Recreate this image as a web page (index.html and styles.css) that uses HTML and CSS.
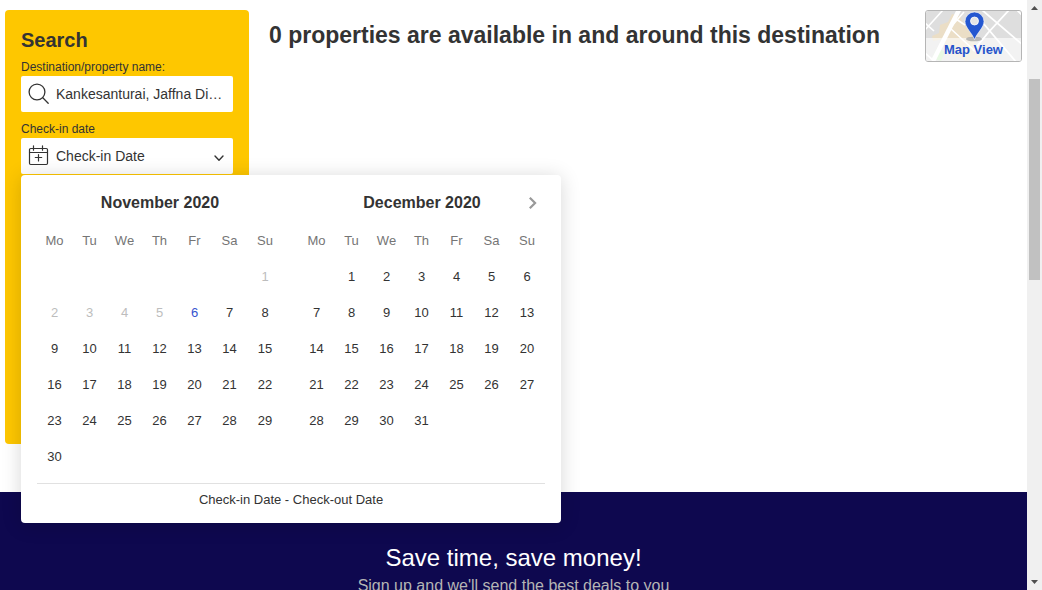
FILE: index.html
```html
<!DOCTYPE html>
<html lang="en">
<head>
<meta charset="utf-8">
<title>Search results</title>
<link rel="stylesheet" href="styles.css">
</head>
<body>
<div class="viewport">
  <div class="page">
    <main class="results">
      <aside class="search">
        <h2 class="search-title">Search</h2>
        <label class="label">Destination/property name:</label>
        <div class="field">
          <svg class="field-icon" width="22" height="22" viewBox="0 0 22 22" fill="none" stroke="#333" stroke-width="1.3" stroke-linecap="round"><circle cx="9" cy="9" r="7.900"/><path d="M14.800 14.800L20.200 20.200"/></svg>
          <span class="field-text">Kankesanturai, Jaffna District, Sri Lanka</span>
        </div>
        <label class="label label-date">Check-in date</label>
        <div class="field field-date">
          <svg class="field-icon" width="22" height="22" viewBox="0 0 22 22" fill="none" stroke="#333" stroke-width="1.2" stroke-linecap="round"><rect x="1.500" y="3.500" width="18" height="16" rx="1.200"/><path d="M1.500 7.500H19.500M5.500 .8v4.400M14.500 .8v4.400M10.500 9.500v6.400M7.300 12.500h6.400"/></svg>
          <span class="field-text">Check-in Date</span>
          <svg class="chevron" width="10" height="7" viewBox="0 0 10 7" fill="none" stroke="#333" stroke-width="1.4" stroke-linecap="round" stroke-linejoin="round"><path d="M1 1l4 4.200L9 1"/></svg>
          <section class="calendar">
            <div class="months">
              <div class="month">
                <h3 class="month-title">November 2020</h3>
                <div class="days" data-days="30" data-offset="6" data-today="6"></div>
              </div>
              <div class="month">
                <h3 class="month-title">December 2020</h3>
                <div class="days" data-days="31" data-offset="1" data-today="0"></div>
              </div>
            </div>
            <div class="range">Check-in Date - Check-out Date</div>
            <svg class="next" width="10" height="14" viewBox="0 0 10 14" fill="none" stroke="#999" stroke-width="2.200"><path d="M1.800 1.700l5.300 5.300-5.300 5.300"/></svg>
          </section>
        </div>
      </aside>
      <h1 class="heading">0 properties are available in and around this destination</h1>
      <div class="map">
        <svg class="map-art" width="95" height="50" viewBox="0 0 95 50">
          <rect width="95" height="50" fill="#dedede"/>
          <path d="M6 25l7-3 1-8 8-3 4-8 8 2 2 5 7 7 6 14 6 15-15 4-18-8-4-14-11 2z" fill="#ebdec6"/>
          <path d="M11 37l8 4-4 9-9-3z" fill="#c5efb8"/>
          <g stroke="#fff" fill="none">
            <path d="M34-3L7 50" stroke-width="4.500"/>
            <path d="M-1 12l9 8M-1 19L17-1M24 17l26 24M30 8l9 6M38 1L24 17" stroke-width="1.600"/>
            <path d="M56-1l42 36M60 24L84-2M47 40L62 22M57 12l34 40M90-2l8 8M-1 42l10 9" stroke-width="1.800"/>
          </g>
          <rect y="27" width="95" height="23" fill="#fff" fill-opacity=".6"/>
          <ellipse cx="48" cy="28" rx="8" ry="2.300" fill="#999" fill-opacity=".65"/>
          <path d="M48.500 28.600C46 22 39 16.500 39 10.500a9.500 9.500 0 0 1 19 0c0 6-7 11.500-9.500 18.100z" fill="#2457d0" stroke="#fff" stroke-width=".6"/>
          <circle cx="48.500" cy="10" r="4" fill="#e5e5e5" stroke="#fff" stroke-width=".8"/>
        </svg>
        <span class="map-label">Map View</span>
      </div>
    </main>
    <footer class="newsletter">
      <div class="news-title">Save time, save money!</div>
      <div class="news-sub">Sign up and we'll send the best deals to you</div>
    </footer>
  </div>
  <div class="scrollbar">
    <svg width="7" height="4" viewBox="0 0 7 4"><path d="M0 4L3.500 0 7 4z" fill="#505050"/></svg>
    <div class="thumb"></div>
    <svg width="7" height="4" viewBox="0 0 7 4"><path d="M0 0h7L3.500 4z" fill="#505050"/></svg>
  </div>
</div>
<script src="calendar.js"></script>
</body>
</html>
```
FILE: styles.css
```css
* { box-sizing: border-box; }
body {
  margin: 0;
  overflow: hidden;
  font-family: "Liberation Sans", Arial, sans-serif;
  color: #333;
}
h1, h2, h3 { margin: 0; }
svg { display: block; flex: none; }
.viewport { display: flex; height: 590px; overflow: hidden; background: #fff; }
.page { width: 1027px; flex: none; }
.results { display: flex; align-items: flex-start; height: 492px; padding: 10px 5px; }
.search {
  width: 244px;
  height: 434px;
  flex: none;
  padding: 16px;
  border-radius: 4px;
  background: #fec700;
}
.search-title { font-size: 20px; line-height: 28px; height: 33px; }
.label { display: block; font-size: 12px; line-height: 17px; }
.label-date { margin-top: 8px; height: 18px; padding-top: 1px; }
.field {
  display: flex;
  align-items: center;
  height: 36px;
  padding: 0 10px 0 7px;
  border-radius: 2px;
  background: #fff;
  font-size: 14px;
}
.field-date { position: relative; }
.field-icon { margin-right: 6px; }
.field-text { flex: 1; overflow: hidden; white-space: nowrap; text-overflow: ellipsis; line-height: 20px; }
.chevron { margin: 4px -1px 0 0; }
.calendar {
  position: absolute;
  z-index: 2;
  top: 37px;
  left: 0;
  width: 540px;
  height: 348px;
  padding: 16px;
  border-radius: 4px;
  background: #fff;
  box-shadow: 0 2px 20px rgba(0, 0, 0, .16);
}
.months { display: flex; gap: 16px; height: 292px; }
.month { width: 246px; }
.month-title { height: 32px; padding-top: 1px; font-size: 16px; line-height: 22px; text-align: center; }
.days {
  display: grid;
  grid-template-columns: repeat(6, 35px) 36px;
  grid-auto-rows: 36px;
  font-size: 13px;
  line-height: 36px;
  text-align: center;
}
.weekday { color: #757575; }
.past { color: #bdbdbd; }
.today { color: #3653cf; }
.range { border-top: 1px solid #e1e1e1; padding-top: 8px; font-size: 13px; line-height: 16px; text-align: center; }
.next { position: absolute; top: 21px; right: 23px; }
.heading { flex: 1; margin-left: 20px; font-size: 23px; line-height: 50px; white-space: nowrap; }
.map {
  position: relative;
  width: 97px;
  height: 52px;
  border: 1px solid #b5b5b5;
  border-radius: 3px;
  overflow: hidden;
}
.map-label {
  position: absolute;
  left: 0;
  right: 0;
  bottom: 2px;
  color: #2754cb;
  font-size: 13px;
  font-weight: bold;
  line-height: 18px;
  text-align: center;
}
.newsletter { height: 120px; padding-top: 50px; background: #0e084f; text-align: center; }
.news-title { color: #fff; font-size: 24px; line-height: 32px; }
.news-sub { padding-top: 1px; color: #b5b5b5; font-size: 16px; line-height: 22px; }
.scrollbar {
  display: flex;
  flex-direction: column;
  align-items: center;
  width: 15px;
  height: 590px;
  padding: 6px 0;
  background: #f0f0f0;
}
.thumb { width: 11px; height: 201px; margin: 69px 0 auto; background: #c1c1c1; }
```
FILE: calendar.js
```js
document.querySelectorAll(".days").forEach(function (grid) {
  var total = Number(grid.dataset.days);
  var today = Number(grid.dataset.today);
  function cell(text, name) {
    var item = document.createElement("span");
    item.textContent = text;
    item.className = name;
    grid.appendChild(item);
    return item;
  }
  ["Mo", "Tu", "We", "Th", "Fr", "Sa", "Su"].forEach(function (day) {
    cell(day, "weekday");
  });
  for (var day = 1; day <= total; day++) {
    var item = cell(day, day < today ? "past" : day === today ? "today" : "day");
    if (day === 1) item.style.gridColumnStart = Number(grid.dataset.offset) + 1;
  }
});
```
